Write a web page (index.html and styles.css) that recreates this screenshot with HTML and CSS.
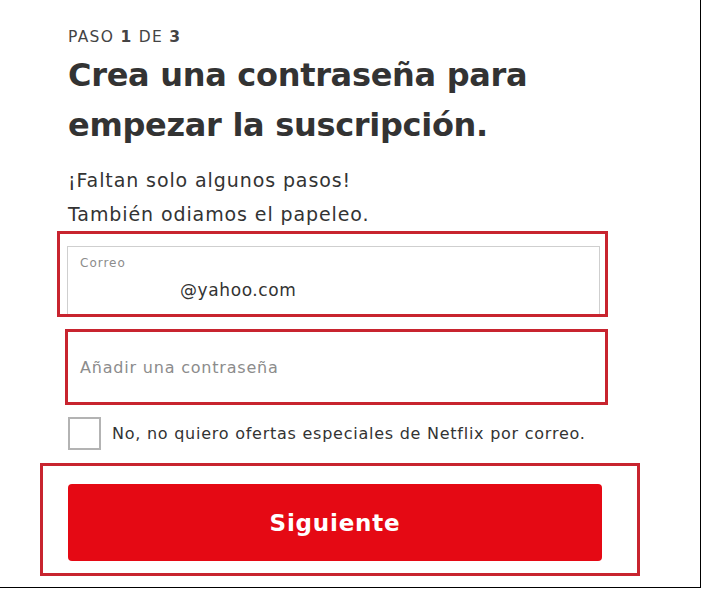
FILE: index.html
```html
<!DOCTYPE html>
<html lang="es">
<head>
<meta charset="utf-8">
<title>Paso 1 de 3</title>
<link rel="stylesheet" href="styles.css">
</head>
<body>
<div class="page">
  <div class="content">
    <div class="step">PASO <b>1</b> DE <b>3</b></div>
    <h1 class="title">Crea una contraseña para empezar la suscripción.</h1>
    <p class="lead first">¡Faltan solo algunos pasos!</p>
    <p class="lead">También odiamos el papeleo.</p>

    <div class="mark mark-email">
      <div class="field">
        <span class="field-label">Correo</span>
        <span class="field-value">@yahoo.com</span>
      </div>
    </div>

    <div class="mark mark-pass">
      <div class="field field-pass">
        <span class="placeholder">Añadir una contraseña</span>
      </div>
    </div>

    <label class="check-row">
      <span class="checkbox"></span>
      <span class="check-text">No, no quiero ofertas especiales de Netflix por correo.</span>
    </label>

    <div class="mark mark-btn">
      <button class="btn" type="button">Siguiente</button>
    </div>
  </div>
</div>
</body>
</html>
```

FILE: styles.css
```css
html, body {
  margin: 0;
  padding: 0;
  background: #fff;
}

.page {
  width: 700px;
  height: 587px;
  border-right: 1px solid #000;
  border-bottom: 1px solid #000;
  overflow: hidden;
  font-family: "DejaVu Sans", "Liberation Sans", sans-serif;
  color: #333;
}

.content {
  padding: 28px 0 0 68px;
  width: 534px;
}

.step {
  font-size: 15.5px;
  line-height: 18px;
  color: #444;
  letter-spacing: 1.3px;
}

.step b {
  font-weight: 700;
}

.title {
  margin: 4px 0 0;
  font-weight: 700;
  font-size: 32px;
  line-height: 50px;
  color: #333;
  letter-spacing: -0.3px;
  width: 500px;
}

.lead {
  margin: 0;
  font-size: 19px;
  line-height: 34px;
  letter-spacing: 0.9px;
  color: #333;
}

.lead.first {
  margin-top: 13px;
}

.mark {
  border: 3px solid #c8242f;
  box-sizing: border-box;
}

.mark-email {
  margin: 0 0 0 -11px;
  width: 551px;
  padding: 12px 5px 0 7px;
}

.field {
  height: 68px;
  box-sizing: border-box;
  border: 1px solid #cfcfcf;
  border-bottom: none;
  padding: 9px 0 0 12px;
  display: flex;
  flex-direction: column;
}

.field-label {
  font-size: 12px;
  line-height: 14px;
  letter-spacing: 1px;
  color: #8c8c8c;
}

.field-value {
  font-size: 17px;
  line-height: 22px;
  letter-spacing: 0.6px;
  margin: 9px 0 0 100px;
  color: #333;
}

.mark-pass {
  margin: 12px 0 0 -3px;
  width: 543px;
  height: 76px;
}

.field-pass {
  border: none;
  height: 70px;
  padding: 0 0 0 12px;
  justify-content: center;
}

.placeholder {
  font-size: 16px;
  letter-spacing: 0.8px;
  color: #8c8c8c;
}

.check-row {
  margin-top: 12px;
  display: flex;
  align-items: center;
  gap: 11px;
  height: 33px;
}

.checkbox {
  width: 33px;
  height: 33px;
  box-sizing: border-box;
  border: 2px solid #b3b3b3;
  flex: none;
}

.check-text {
  font-size: 16px;
  letter-spacing: 0.75px;
  color: #333;
}

.mark-btn {
  margin: 13px 0 0 -28px;
  width: 600px;
  height: 113px;
  padding: 18px 35px 0 25px;
}

.btn {
  display: block;
  width: 534px;
  height: 77px;
  border: none;
  border-radius: 4px;
  background: #e50914;
  color: #fff;
  font-family: "DejaVu Sans", "Liberation Sans", sans-serif;
  font-weight: 700;
  font-size: 23px;
  letter-spacing: 0.8px;
  padding: 0;
}
```
